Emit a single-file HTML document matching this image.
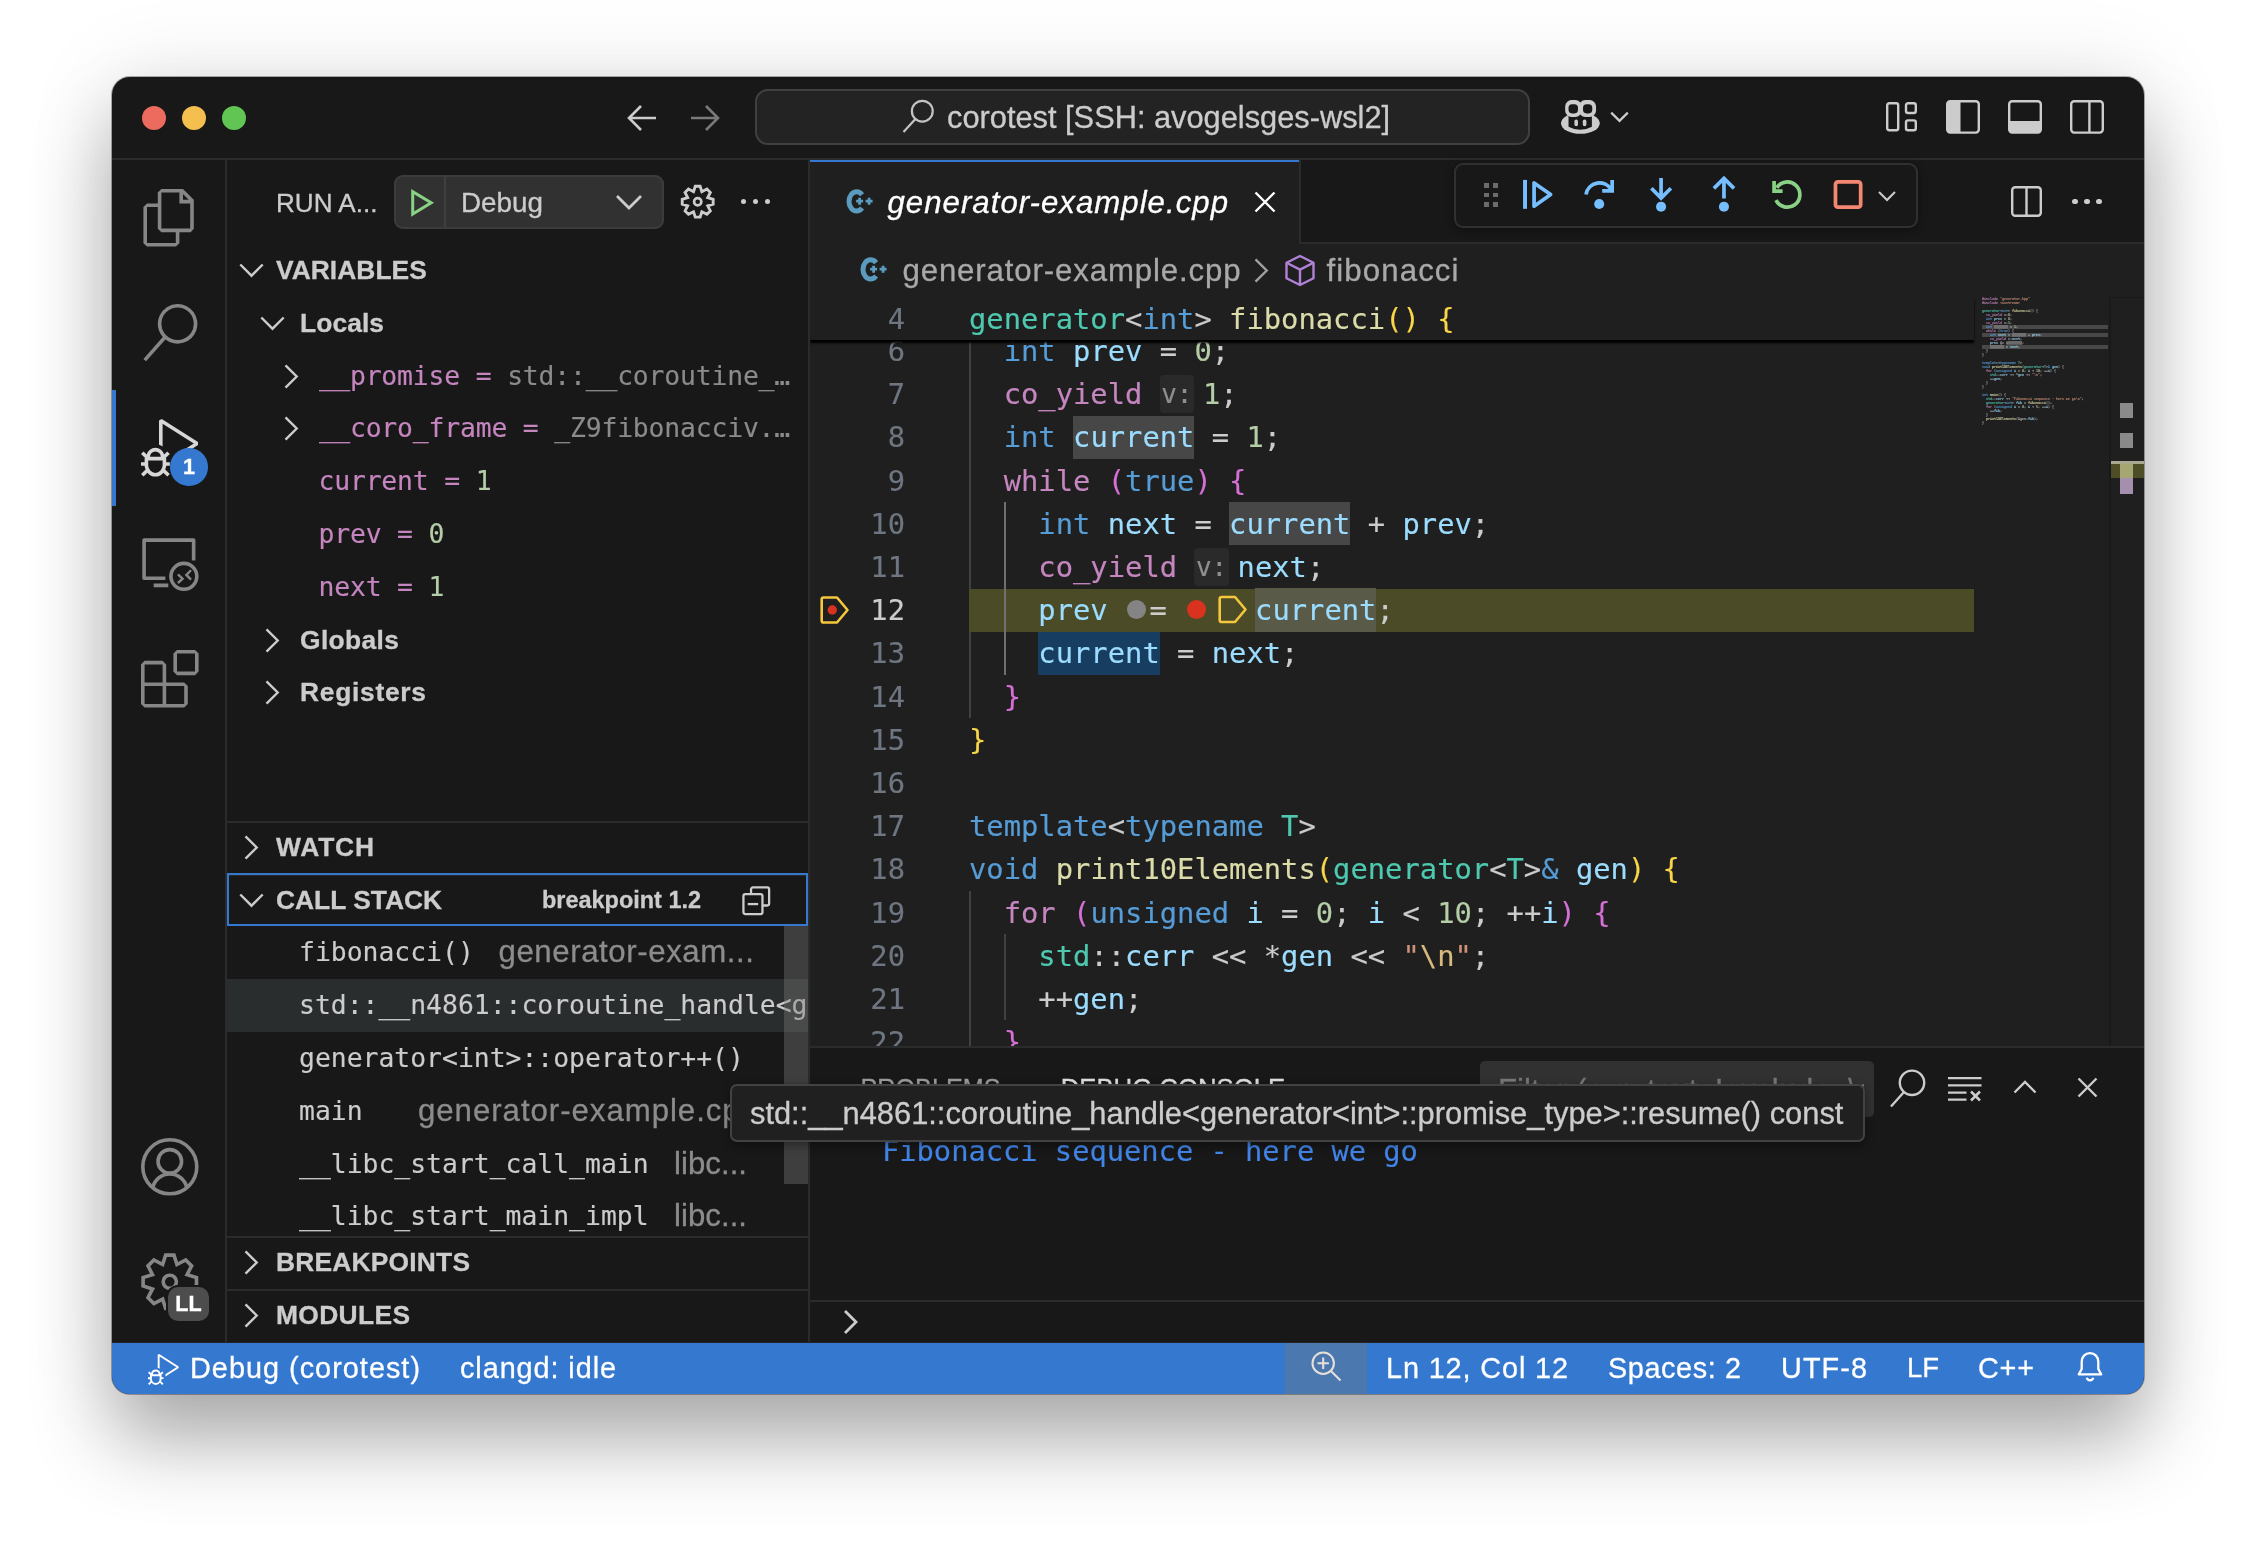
<!DOCTYPE html>
<html lang="en"><head><meta charset="utf-8"><title>generator-example.cpp - corotest [SSH: avogelsges-wsl2]</title>
<style>
html,body{margin:0;padding:0}
body{width:2256px;height:1542px;background:#fff;overflow:hidden;position:relative;font-family:"Liberation Sans",sans-serif;-webkit-text-stroke:.3px}
#win{position:absolute;left:112px;top:77px;width:2032px;height:1317.4px;border-radius:18px;background:#181818;
 box-shadow:0 0 0 1px rgba(0,0,0,.30),0 0 90px rgba(0,0,0,.10),0 48px 80px rgba(0,0,0,.30);}
#clip{position:absolute;left:0;top:0;width:2032px;height:1317.4px;border-radius:18px;overflow:hidden;will-change:transform}
.abs{position:absolute}
svg{position:absolute;overflow:visible}
.mono{font-family:"DejaVu Sans Mono","Liberation Mono",monospace;-webkit-text-stroke:.15px}
.ln{-webkit-text-stroke:.15px;position:absolute;left:0;width:1164px;height:43.2px;line-height:43.2px;font:28.8px "DejaVu Sans Mono","Liberation Mono",monospace;line-height:43.2px;white-space:pre;color:#ccc}
.num{position:absolute;left:0;top:.8px;width:95px;text-align:right;color:#6e7681}
.code{position:absolute;left:159px;top:.8px}
.k{color:#569cd6}.c{color:#c586c0}.t{color:#4ec9b0}.f{color:#dcdcaa}.v{color:#9cdcfe}.n{color:#b5cea8}.s{color:#ce9178}.e{color:#d7ba7d}.o{color:#d4d4d4}
.b1{color:#f9d649}.b2{color:#d670d6}.b3{color:#179fff}
.ih{display:inline-block;font-size:25.9px;color:#8f8f8f;background:#2a2a2a;border-radius:4px;height:38px;line-height:38px;vertical-align:1px;padding:0 1.5px;margin-right:9px}
.wh,.wh2,.ws{display:inline-block;height:43.2px;vertical-align:top;margin-top:-.8px;padding-top:.8px;box-sizing:border-box}.wh{background:#474747}.wh2{background:#5a5a48}.mh{background:#777;color:#777}.ws{background:#173d60}
.row{position:absolute;left:0;width:581px;height:52.8px}
</style></head><body>
<div id="win"><div id="clip">
<div class="abs" style="left:0px;top:81px;width:2032px;height:2px;background:#2b2b2b;"></div>
<div class="abs" style="left:30px;top:29px;width:24px;height:24px;background:#ec6a5e;border-radius:50%"></div>
<div class="abs" style="left:70px;top:29px;width:24px;height:24px;background:#f4bf4f;border-radius:50%"></div>
<div class="abs" style="left:110px;top:29px;width:24px;height:24px;background:#61c554;border-radius:50%"></div>
<svg style="left:512px;top:23px;" width="36" height="36" viewBox="0 0 36 36"><path d="M32 18H5M17 6L5 18l12 12" fill="none" stroke="#ccc" stroke-width="2.6" stroke-linejoin="miter"/></svg>
<svg style="left:575px;top:23px;" width="36" height="36" viewBox="0 0 36 36"><path d="M4 18h27M19 6l12 12-12 12" fill="none" stroke="#7a7a7a" stroke-width="2.6"/></svg>
<div class="abs" style="left:643px;top:12.3px;width:775px;height:55.4px;background:#232323;border-radius:13px;box-shadow:inset 0 0 0 2px #404040"></div>
<svg style="left:788px;top:21px;" width="36" height="38" viewBox="0 0 36 38"><circle cx="22.300" cy="13.200" r="10.400" fill="none" stroke="#c4c4c4" stroke-width="2.200"/><path d="M15.400 21L3.500 34" stroke="#c4c4c4" stroke-width="2.200" fill="none"/></svg>
<div style="position:absolute;left:835px;top:14.2px;height:54px;line-height:54px;white-space:pre;font:normal normal 30.79px 'Liberation Sans', sans-serif;line-height:54px;color:#ccc;">corotest [SSH: avogelsges-wsl2]</div>
<svg style="left:1449.4px;top:23px;" width="38.8" height="33.8" viewBox="0 0 39.300 34.300"><ellipse cx="19.650" cy="23.500" rx="19.650" ry="10.800" fill="#ccc"/><path d="M7.600 13H31.300V27.100Q19.500 33.500 7.600 27.100Z" fill="#181818"/><rect x="4.200" y="0" width="16.800" height="17.200" rx="6.500" fill="#ccc"/><rect x="18.100" y="0" width="17.400" height="17.200" rx="6.500" fill="#ccc"/><rect x="7.600" y="4.400" width="9.600" height="9.200" rx="3.600" fill="#181818"/><rect x="22.300" y="4.400" width="9.400" height="9.200" rx="3.600" fill="#181818"/><rect x="13.600" y="19.700" width="3.600" height="7" rx="1.800" fill="#ccc"/><rect x="22.100" y="19.700" width="3.600" height="7" rx="1.800" fill="#ccc"/></svg>
<svg style="left:1498px;top:33.7px;" width="19" height="12" viewBox="0 0 19 12"><path d="M1.200 1.600l8.300 8.300 8.300-8.300" fill="none" stroke="#ccc" stroke-width="2.200"/></svg>
<svg style="left:1774px;top:25px;" width="31" height="30" viewBox="0 0 31 30"><rect x="1.2" y="1.2" width="11" height="27" rx="2" fill="none" stroke="#ccc" stroke-width="2.4"/><rect x="20" y="1.2" width="9.800" height="9.800" rx="2" fill="none" stroke="#ccc" stroke-width="2.4"/><rect x="20" y="18.400" width="9.800" height="9.800" rx="2" fill="none" stroke="#ccc" stroke-width="2.4"/></svg>
<svg style="left:1833.5px;top:23px;" width="34" height="34" viewBox="0 0 34 34"><rect x="1.2" y="1.2" width="31.6" height="31.400" rx="3" fill="none" stroke="#ccc" stroke-width="2.4"/><path d="M1.2 3.200a2 2 0 0 1 2-2H14.5v31.400H3.200a2 2 0 0 1-2-2z" fill="#ccc"/></svg>
<svg style="left:1896.3px;top:23px;" width="34" height="34" viewBox="0 0 34 34"><rect x="1.2" y="1.2" width="31.6" height="31.400" rx="3" fill="none" stroke="#ccc" stroke-width="2.4"/><path d="M1.2 21h31.600v9.600a2 2 0 0 1-2 2H3.200a2 2 0 0 1-2-2z" fill="#ccc"/></svg>
<svg style="left:1957.6px;top:23px;" width="34" height="34" viewBox="0 0 34 34"><rect x="1.2" y="1.2" width="31.6" height="31.400" rx="3" fill="none" stroke="#ccc" stroke-width="2.4"/><path d="M19.400 1.200v31.400" stroke="#ccc" stroke-width="2.4"/></svg>
<div class="abs" style="left:113px;top:83px;width:2px;height:1182px;background:#2b2b2b;"></div>
<div class="abs" style="left:0px;top:313.4px;width:4px;height:115.2px;background:#3578d0;"></div>
<svg style="left:28.8px;top:111.8px;" width="57.6" height="57.6" viewBox="0 0 24 24"><path fill="#868686" d="M17.5 0h-9L7 1.500V6H2.500L1 7.500v15.070L2.500 24h12.070L16 22.570V18h4.700l1.300-1.430V4.500L17.500 0zm0 2.120l2.380 2.380H17.500V2.120zm-3 20.380h-12v-15H7v9.070L8.500 18h6v4.500zm6-6h-12v-15H16V6h4.500v10.500z"/></svg>
<svg style="left:28.8px;top:227.0px;" width="57.6" height="57.6" viewBox="0 0 24 24"><path fill="#868686" d="M15.250 0a8.250 8.250 0 0 0-6.180 13.720L1 22.880l1.120 1 8.050-9.120A8.251 8.251 0 1 0 15.250.010V0zm0 15a6.750 6.750 0 1 1 0-13.500 6.750 6.750 0 0 1 0 13.500z"/></svg>
<svg style="left:28.8px;top:342.2px;" width="57.6" height="57.6" viewBox="0 0 24 24"><path fill="#d7d7d7" d="M10.940 13.500l-1.320 1.320a3.730 3.730 0 0 0-7.240 0L1.060 13.500 0 14.560l1.720 1.720-.22.22V18H0v1.500h1.500v.080c.077.489.214.966.410 1.420L0 22.940 1.060 24l1.650-1.650A4.308 4.308 0 0 0 6 24a4.310 4.310 0 0 0 3.290-1.650L10.940 24 12 22.940 10.090 21c.198-.464.336-.951.410-1.450v-.1H12V18h-1.500v-1.500l-.22-.22L12 14.560l-1.060-1.060zM6 13.500a2.250 2.250 0 0 1 2.250 2.250h-4.500A2.250 2.250 0 0 1 6 13.500zm3 6a3.330 3.330 0 0 1-3 3 3.330 3.330 0 0 1-3-3v-2.250h6v2.250zm14.760-9.900v1.260L13.500 17.370V15.600l8.500-5.370L9 2v9.460a5.070 5.070 0 0 0-1.500-.72V.630L8.640 0l15.120 9.600z"/></svg>
<div class="abs" style="left:58.3px;top:371.3px;width:37.4px;height:37.4px;background:#3578d0;border-radius:50%"></div>
<div style="position:absolute;left:58.3px;top:371.3px;height:37.4px;line-height:37.4px;white-space:pre;font:normal bold 21.6px 'Liberation Sans', sans-serif;line-height:37.4px;color:#fff;width:37.4px;text-align:center">1</div>
<svg style="left:27.6px;top:457.7px;" width="57.6" height="57.6" viewBox="0 0 24 24"><path fill="none" stroke="#868686" stroke-width="1.5" stroke-linejoin="round" d="M10.560 18.050H1.700V2.150h20.650v8.500M5.700 21h6.100"/><circle cx="18.280" cy="17.230" r="5.400" fill="none" stroke="#868686" stroke-width="1.5"/><path fill="none" stroke="#868686" stroke-width="1" d="M15.800 16.380l1.950 1.820-1.950 1.800M21.270 14.680l-1.950 1.940 1.950 1.950"/></svg>
<svg style="left:28.8px;top:572.6px;" width="57.6" height="57.6" viewBox="0 0 24 24"><path fill="#868686" d="M13.500 1.500L15 0h7.500L24 1.500V9l-1.500 1.500H15L13.500 9V1.500zm1.500 0V9h7.500V1.500H15zM0 15V6l1.500-1.500H9L10.500 6v7.500H18l1.500 1.500v7.500L18 24H1.500L0 22.500V15zm9-1.500V6H1.500v7.500H9zM9 15H1.500v7.500H9V15zm1.500 7.500H18V15h-7.500v7.500z"/></svg>
<svg style="left:28.5px;top:1061.3px;" width="57.6" height="57.6" viewBox="0 0 24 24"><circle cx="12" cy="12" r="11.250" fill="none" stroke="#868686" stroke-width="1.5"/><circle cx="12" cy="9.750" r="4.900" fill="none" stroke="#868686" stroke-width="1.5"/><path d="M4.900 20.600a7.300 7.300 0 0 1 14.200 0" fill="none" stroke="#868686" stroke-width="1.5"/></svg>
<svg style="left:28.8px;top:1176.4px;" width="57.6" height="57.6" viewBox="0 0 24 24"><path d="M10.26 0.88 L13.74 0.88 L14.98 4.79 L18.63 2.91 L21.09 5.37 L19.21 9.02 L23.12 10.26 L23.12 13.74 L19.21 14.98 L21.09 18.63 L18.63 21.09 L14.98 19.21 L13.74 23.12 L10.26 23.12 L9.02 19.21 L5.37 21.09 L2.91 18.63 L4.79 14.98 L0.88 13.74 L0.88 10.26 L4.79 9.02 L2.91 5.37 L5.37 2.91 L9.02 4.79Z" fill="none" stroke="#868686" stroke-width="1.5" stroke-linejoin="miter"/><circle cx="12" cy="12" r="2.750" fill="none" stroke="#868686" stroke-width="1.5"/></svg>
<div class="abs" style="left:54px;top:1208px;width:45px;height:38px;background:#181818;border-radius:12px"></div>
<div class="abs" style="left:56px;top:1210px;width:41px;height:34px;background:#4d4d4d;border-radius:10px"></div>
<div style="position:absolute;left:56px;top:1210px;height:34px;line-height:34px;white-space:pre;font:normal bold 21.6px 'Liberation Sans', sans-serif;line-height:34px;color:#fff;width:41px;text-align:center">LL</div>
<div class="abs" style="left:696px;top:83px;width:2px;height:1182px;background:#2b2b2b;"></div>
<div style="position:absolute;left:164px;top:100.2px;height:52.8px;line-height:52.8px;white-space:pre;font:normal normal 26.1px 'Liberation Sans', sans-serif;line-height:52.8px;color:#cccccc;">RUN A...</div>
<div class="abs" style="left:282px;top:98px;width:270px;height:53.5px;background:#313131;border-radius:9px;box-shadow:inset 0 0 0 2px #3c3c3c"></div>
<div class="abs" style="left:331.5px;top:100px;width:2px;height:49.5px;background:#3f3f3f;"></div>
<svg style="left:299.4px;top:112.2px;" width="23" height="27.6" viewBox="0 0 23 27.600"><path d="M1.700 2.600v22.400L20.200 13.800z" fill="none" stroke="#89d185" stroke-width="3" stroke-linejoin="miter"/></svg>
<div style="position:absolute;left:349px;top:99px;height:53.5px;line-height:53.5px;white-space:pre;font:normal normal 27.84px 'Liberation Sans', sans-serif;line-height:53.5px;color:#cccccc;">Debug</div>
<svg style="left:503px;top:116px;" width="28" height="18" viewBox="0 0 28 18"><path d="M2 3l12 12L26 3" fill="none" stroke="#ccc" stroke-width="2.800"/></svg>
<svg style="left:569.2px;top:108.1px;" width="33.4" height="33.4" viewBox="0 0 24 24"><path d="M10.26 0.88 L13.74 0.88 L14.98 4.79 L18.63 2.91 L21.09 5.37 L19.21 9.02 L23.12 10.26 L23.12 13.74 L19.21 14.98 L21.09 18.63 L18.63 21.09 L14.98 19.21 L13.74 23.12 L10.26 23.12 L9.02 19.21 L5.37 21.09 L2.91 18.63 L4.79 14.98 L0.88 13.74 L0.88 10.26 L4.79 9.02 L2.91 5.37 L5.37 2.91 L9.02 4.79Z" fill="none" stroke="#ccc" stroke-width="2.050" stroke-linejoin="miter"/><circle cx="12" cy="12" r="2.600" fill="none" stroke="#ccc" stroke-width="1.900"/></svg>
<div class="abs" style="left:629.1px;top:122.2px;width:5.2px;height:5.2px;background:#ccc;border-radius:50%"></div>
<div class="abs" style="left:641.1px;top:122.2px;width:5.2px;height:5.2px;background:#ccc;border-radius:50%"></div>
<div class="abs" style="left:653.1px;top:122.2px;width:5.2px;height:5.2px;background:#ccc;border-radius:50%"></div>
<svg style="left:126.5px;top:186.2px;" width="25" height="14.5" viewBox="0 0 25 14.500"><path d="M1.300 1.500L12.500 12.700 23.700 1.500" fill="none" stroke="#ccc" stroke-width="2.400"/></svg>
<div style="position:absolute;left:164px;top:167px;height:52.8px;line-height:52.8px;white-space:pre;font:normal bold 26.4px 'Liberation Sans', sans-serif;line-height:52.8px;color:#cccccc;letter-spacing:0.032px;">VARIABLES</div>
<svg style="left:148.0px;top:239.0px;" width="25" height="14.5" viewBox="0 0 25 14.500"><path d="M1.300 1.500L12.500 12.700 23.700 1.500" fill="none" stroke="#ccc" stroke-width="2.400"/></svg>
<div style="position:absolute;left:188px;top:219.8px;height:52.8px;line-height:52.8px;white-space:pre;font:normal bold 26.4px 'Liberation Sans', sans-serif;line-height:52.8px;color:#cccccc;letter-spacing:0.078px;">Locals</div>
<svg style="left:171.8px;top:286.5px;" width="14.5" height="25" viewBox="0 0 14.500 25"><path d="M1.500 1.300L12.700 12.500 1.500 23.700" fill="none" stroke="#ccc" stroke-width="2.400"/></svg>
<div class="abs mono" style="left:206.5px;top:272.6px;height:52.8px;line-height:52.8px;font-size:26.4px;letter-spacing:-.17px;white-space:pre;color:#8b8b8b;width:476px;overflow:hidden;text-overflow:ellipsis"><span style="color:#c586c0">__promise = </span>std::__coroutine_traits_impl&lt;generator&lt;int&gt;&gt;::promise_type</div>
<svg style="left:171.8px;top:339.3px;" width="14.5" height="25" viewBox="0 0 14.500 25"><path d="M1.500 1.300L12.700 12.500 1.500 23.700" fill="none" stroke="#ccc" stroke-width="2.400"/></svg>
<div class="abs mono" style="left:206.5px;top:325.4px;height:52.8px;line-height:52.8px;font-size:26.4px;letter-spacing:-.17px;white-space:pre;color:#8b8b8b;width:476px;overflow:hidden;text-overflow:ellipsis"><span style="color:#c586c0">__coro_frame = </span>_Z9fibonacciv.Frame</div>
<div class="abs mono" style="left:206.5px;top:378.2px;height:52.8px;line-height:52.8px;font-size:26.4px;letter-spacing:-.17px;white-space:pre;color:#b5cea8;width:476px;overflow:hidden;text-overflow:ellipsis"><span style="color:#c586c0">current = </span>1</div>
<div class="abs mono" style="left:206.5px;top:431.0px;height:52.8px;line-height:52.8px;font-size:26.4px;letter-spacing:-.17px;white-space:pre;color:#b5cea8;width:476px;overflow:hidden;text-overflow:ellipsis"><span style="color:#c586c0">prev = </span>0</div>
<div class="abs mono" style="left:206.5px;top:483.8px;height:52.8px;line-height:52.8px;font-size:26.4px;letter-spacing:-.17px;white-space:pre;color:#b5cea8;width:476px;overflow:hidden;text-overflow:ellipsis"><span style="color:#c586c0">next = </span>1</div>
<svg style="left:152.8px;top:550.5px;" width="14.5" height="25" viewBox="0 0 14.500 25"><path d="M1.500 1.300L12.700 12.500 1.500 23.700" fill="none" stroke="#ccc" stroke-width="2.400"/></svg>
<div style="position:absolute;left:188px;top:536.6px;height:52.8px;line-height:52.8px;white-space:pre;font:normal bold 26.4px 'Liberation Sans', sans-serif;line-height:52.8px;color:#cccccc;letter-spacing:0.367px;">Globals</div>
<svg style="left:152.8px;top:603.3px;" width="14.5" height="25" viewBox="0 0 14.500 25"><path d="M1.500 1.300L12.700 12.500 1.500 23.700" fill="none" stroke="#ccc" stroke-width="2.400"/></svg>
<div style="position:absolute;left:188px;top:589.4px;height:52.8px;line-height:52.8px;white-space:pre;font:normal bold 26.4px 'Liberation Sans', sans-serif;line-height:52.8px;color:#cccccc;letter-spacing:0.715px;">Registers</div>
<div class="abs" style="left:115px;top:743.8px;width:581px;height:2px;background:#2b2b2b;"></div>
<svg style="left:132.3px;top:757.7px;" width="14.5" height="25" viewBox="0 0 14.500 25"><path d="M1.500 1.300L12.700 12.500 1.500 23.700" fill="none" stroke="#ccc" stroke-width="2.400"/></svg>
<div style="position:absolute;left:164px;top:743.8px;height:52.8px;line-height:52.8px;white-space:pre;font:normal bold 26.4px 'Liberation Sans', sans-serif;line-height:52.8px;color:#cccccc;letter-spacing:0.801px;">WATCH</div>
<div class="abs" style="left:115px;top:796.6px;width:581px;height:2px;background:#2b2b2b;"></div>
<svg style="left:126.5px;top:815.8px;" width="25" height="14.5" viewBox="0 0 25 14.500"><path d="M1.300 1.500L12.500 12.700 23.700 1.500" fill="none" stroke="#ccc" stroke-width="2.400"/></svg>
<div style="position:absolute;left:164px;top:796.6px;height:52.8px;line-height:52.8px;white-space:pre;font:normal bold 26.38px 'Liberation Sans', sans-serif;line-height:52.8px;color:#cccccc;">CALL STACK</div>
<div class="abs" style="left:115px;top:796.1px;width:577px;height:49.100px;border:2px solid #3578d0"></div>
<div style="position:absolute;left:430px;top:796.6px;height:52.8px;line-height:52.8px;white-space:pre;font:normal bold 23.46px 'Liberation Sans', sans-serif;line-height:52.8px;color:#cccccc;">breakpoint 1.2</div>
<svg style="left:629.5px;top:808.5px;" width="29.5" height="29.5" viewBox="0 0 31 31"><path d="M9.500 8.500V3.500a2 2 0 0 1 2-2h15a2 2 0 0 1 2 2v15a2 2 0 0 1-2 2h-5" fill="none" stroke="#ccc" stroke-width="2.400"/><rect x="1.500" y="8.500" width="20" height="21" rx="2" fill="none" stroke="#ccc" stroke-width="2.400"/><path d="M6 19h11" stroke="#ccc" stroke-width="2.400"/></svg>
<div class="abs" style="left:115px;top:902.2px;width:581px;height:52.8px;background:#2a2d2e;"></div>
<div class="abs mono" style="left:187px;top:849.4px;height:52.8px;line-height:52.8px;font-size:26.4px;white-space:pre;color:#ccc;width:509px;overflow:hidden">fibonacci()</div>
<div style="position:absolute;left:386.5px;top:849.4px;height:52.8px;line-height:52.8px;white-space:pre;font:normal normal 31.2px 'Liberation Sans', sans-serif;line-height:52.8px;color:#8c8c8c;letter-spacing:0.584px;">generator-exam...</div>
<div class="abs mono" style="left:187px;top:902.2px;height:52.8px;line-height:52.8px;font-size:26.4px;white-space:pre;color:#ccc;width:509px;overflow:hidden">std::__n4861::coroutine_handle&lt;generator&lt;int&gt;::promise_type&gt;::resume() const</div>
<div class="abs mono" style="left:187px;top:955.0px;height:52.8px;line-height:52.8px;font-size:26.4px;white-space:pre;color:#ccc;width:509px;overflow:hidden">generator&lt;int&gt;::operator++()</div>
<div class="abs mono" style="left:187px;top:1007.8px;height:52.8px;line-height:52.8px;font-size:26.4px;white-space:pre;color:#ccc;width:509px;overflow:hidden">main</div>
<div style="position:absolute;left:306px;top:1007.8px;height:52.8px;line-height:52.8px;white-space:pre;font:normal normal 31.2px 'Liberation Sans', sans-serif;line-height:52.8px;color:#8c8c8c;letter-spacing:0.963px;">generator-example.cpp</div>
<div class="abs mono" style="left:187px;top:1060.6px;height:52.8px;line-height:52.8px;font-size:26.4px;white-space:pre;color:#ccc;width:509px;overflow:hidden">__libc_start_call_main</div>
<div style="position:absolute;left:562px;top:1060.6px;height:52.8px;line-height:52.8px;white-space:pre;font:normal normal 31.2px 'Liberation Sans', sans-serif;line-height:52.8px;color:#8c8c8c;letter-spacing:0.034px;">libc...</div>
<div class="abs mono" style="left:187px;top:1113.4px;height:52.8px;line-height:52.8px;font-size:26.4px;white-space:pre;color:#ccc;width:509px;overflow:hidden">__libc_start_main_impl</div>
<div style="position:absolute;left:562px;top:1113.4px;height:52.8px;line-height:52.8px;white-space:pre;font:normal normal 31.2px 'Liberation Sans', sans-serif;line-height:52.8px;color:#8c8c8c;letter-spacing:0.034px;">libc...</div>
<div class="abs" style="left:672px;top:849.4px;width:24px;height:258px;background:rgba(121,121,121,.4);"></div>
<div class="abs" style="left:115px;top:1159px;width:581px;height:2px;background:#2b2b2b;"></div>
<svg style="left:132.3px;top:1172.9px;" width="14.5" height="25" viewBox="0 0 14.500 25"><path d="M1.500 1.300L12.700 12.500 1.500 23.700" fill="none" stroke="#ccc" stroke-width="2.400"/></svg>
<div style="position:absolute;left:164px;top:1159px;height:52.8px;line-height:52.8px;white-space:pre;font:normal bold 26.4px 'Liberation Sans', sans-serif;line-height:52.8px;color:#cccccc;letter-spacing:0.191px;">BREAKPOINTS</div>
<div class="abs" style="left:115px;top:1211.8px;width:581px;height:2px;background:#2b2b2b;"></div>
<svg style="left:132.3px;top:1225.7px;" width="14.5" height="25" viewBox="0 0 14.500 25"><path d="M1.500 1.300L12.700 12.500 1.500 23.700" fill="none" stroke="#ccc" stroke-width="2.400"/></svg>
<div style="position:absolute;left:164px;top:1211.8px;height:52.8px;line-height:52.8px;white-space:pre;font:normal bold 26.4px 'Liberation Sans', sans-serif;line-height:52.8px;color:#cccccc;letter-spacing:0.339px;">MODULES</div>
<div class="abs" style="left:698px;top:83px;width:1334px;height:888px;background:#1f1f1f;"></div>
<div class="abs" style="left:698px;top:83px;width:1334px;height:84px;background:#181818;"></div>
<div class="abs" style="left:698px;top:165px;width:1334px;height:2px;background:#2b2b2b;"></div>
<div class="abs" style="left:698px;top:83px;width:490px;height:84px;background:#1f1f1f;"></div>
<div class="abs" style="left:698px;top:83px;width:490px;height:2px;background:#3578d0;"></div>
<div class="abs" style="left:1187px;top:83px;width:2px;height:84px;background:#2b2b2b;"></div>
<svg style="left:733.8px;top:111.5px;" width="27" height="25" viewBox="0 0 27 25"><path d="M16.100 5.700A7.600 9.700 0 1 0 16.100 19.100" fill="none" stroke="#5b9bbd" stroke-width="5"/><path d="M10.100 12.200h7M13.600 8.700v7M19.600 12.200h7M23.100 8.700v7" stroke="#5b9bbd" stroke-width="2.800" fill="none"/></svg>
<div style="position:absolute;left:775.5px;top:100.2px;height:52.8px;line-height:52.8px;white-space:pre;font:italic normal 31.2px 'Liberation Sans', sans-serif;line-height:52.8px;color:#fff;letter-spacing:1.016px;">generator-example.cpp</div>
<svg style="left:1142px;top:114px;" width="22" height="22" viewBox="0 0 22 22"><path d="M1.500 1.500l19 19M20.500 1.500l-19 19" stroke="#fff" stroke-width="2.400" fill="none"/></svg>
<svg style="left:1899px;top:108.5px;" width="31" height="31" viewBox="0 0 31 31"><rect x="1.200" y="1.200" width="28.600" height="28.600" rx="3" fill="none" stroke="#ccc" stroke-width="2.400"/><path d="M15.500 1.200v28.600" stroke="#ccc" stroke-width="2.400"/></svg>
<div class="abs" style="left:1960.4px;top:122.2px;width:5.2px;height:5.2px;background:#ccc;border-radius:50%"></div>
<div class="abs" style="left:1972.4px;top:122.2px;width:5.2px;height:5.2px;background:#ccc;border-radius:50%"></div>
<div class="abs" style="left:1984.4px;top:122.2px;width:5.2px;height:5.2px;background:#ccc;border-radius:50%"></div>
<div class="abs" style="left:1341.5px;top:86px;width:464.5px;height:65px;background:#181818;border-radius:9px;box-shadow:inset 0 0 0 2px #303030,0 2px 8px rgba(0,0,0,.36)"></div>
<div class="abs" style="left:1371.8px;top:106.1px;width:4.8px;height:4.8px;background:#6c6c6c;"></div>
<div class="abs" style="left:1381.2px;top:106.1px;width:4.8px;height:4.8px;background:#6c6c6c;"></div>
<div class="abs" style="left:1371.8px;top:115.6px;width:4.8px;height:4.8px;background:#6c6c6c;"></div>
<div class="abs" style="left:1381.2px;top:115.6px;width:4.8px;height:4.8px;background:#6c6c6c;"></div>
<div class="abs" style="left:1371.8px;top:125.2px;width:4.8px;height:4.8px;background:#6c6c6c;"></div>
<div class="abs" style="left:1381.2px;top:125.2px;width:4.8px;height:4.8px;background:#6c6c6c;"></div>
<svg style="left:1405.8px;top:98.2px;" width="38.4" height="38.4" viewBox="0 0 16 16"><path d="M2.930 2.050v12.050" stroke="#75beff" stroke-width="1.650" fill="none"/><path d="M6.700 3.300V13L13.600 8.150z" fill="none" stroke="#75beff" stroke-width="1.550" stroke-linejoin="round"/></svg>
<svg style="left:1467.8px;top:98.2px;" width="38.4" height="38.4" viewBox="0 0 16 16"><path d="M2.500 8.100A5.700 5.700 0 0 1 13.100 6.200" fill="none" stroke="#75beff" stroke-width="1.550"/><path d="M13.400 2.050V6.600H9.250" fill="none" stroke="#75beff" stroke-width="1.550"/><circle cx="8" cy="12.100" r="2.100" fill="#75beff"/></svg>
<svg style="left:1530.1px;top:98.2px;" width="38.4" height="38.4" viewBox="0 0 16 16"><path d="M7.950 1.200v8.200M3.900 5.500L7.950 9.600l4.100-4.100" fill="none" stroke="#75beff" stroke-width="1.550"/><circle cx="7.950" cy="13.200" r="2.100" fill="#75beff"/></svg>
<svg style="left:1592.8px;top:98.2px;" width="38.4" height="38.4" viewBox="0 0 16 16"><path d="M7.900 9.800V1.600M3.700 5.600L7.900 1.400l4.200 4.200" fill="none" stroke="#75beff" stroke-width="1.550"/><circle cx="7.900" cy="13.200" r="2.100" fill="#75beff"/></svg>
<svg style="left:1654.8px;top:98.2px;" width="38.4" height="38.4" viewBox="0 0 16 16"><path d="M4.050 5.300A5.250 5.250 0 1 1 3.750 10.500" fill="none" stroke="#89d185" stroke-width="1.550"/><path d="M2.950 2.500V6.700H6.500" fill="none" stroke="#89d185" stroke-width="1.550"/></svg>
<svg style="left:1717.4px;top:98.2px;" width="38.4" height="38.4" viewBox="0 0 16 16"><rect x="2.700" y="2.850" width="10.500" height="10.550" rx="1" fill="none" stroke="#f48771" stroke-width="1.550"/></svg>
<svg style="left:1765.5px;top:113.5px;" width="18" height="11" viewBox="0 0 18 11"><path d="M1 1l8 8 8-8" fill="none" stroke="#ccc" stroke-width="2"/></svg>
<svg style="left:748px;top:179.6px;" width="27" height="25" viewBox="0 0 27 25"><path d="M16.100 5.700A7.600 9.700 0 1 0 16.100 19.100" fill="none" stroke="#5b9bbd" stroke-width="5"/><path d="M10.100 12.200h7M13.600 8.700v7M19.600 12.200h7M23.100 8.700v7" stroke="#5b9bbd" stroke-width="2.800" fill="none"/></svg>
<div style="position:absolute;left:790.5px;top:167.8px;height:52.8px;line-height:52.8px;white-space:pre;font:normal normal 31.2px 'Liberation Sans', sans-serif;line-height:52.8px;color:#a9a9a9;letter-spacing:0.863px;">generator-example.cpp</div>
<svg style="left:1141.8px;top:180.9px;" width="14.5" height="25" viewBox="0 0 14.500 25"><path d="M1.500 1.300L12.700 12.500 1.500 23.700" fill="none" stroke="#a0a0a0" stroke-width="2.400"/></svg>
<svg style="left:1172px;top:177px;" width="32" height="33" viewBox="0 0 32 33"><path d="M16 2L29.500 8.800v15.400L16 31 2.500 24.200V8.800z" fill="none" stroke="#b180d7" stroke-width="2.400" stroke-linejoin="round"/><path d="M2.500 8.800L16 15.600l13.500-6.800M16 15.600V31" fill="none" stroke="#b180d7" stroke-width="2.400" stroke-linejoin="round"/></svg>
<div style="position:absolute;left:1214.5px;top:167.8px;height:52.8px;line-height:52.8px;white-space:pre;font:normal normal 31.2px 'Liberation Sans', sans-serif;line-height:52.8px;color:#a9a9a9;letter-spacing:1.113px;">fibonacci</div>
<div class="abs" style="left:698px;top:219.8px;width:1300px;height:749.2px;overflow:hidden">
<div class="abs" style="left:159px;top:-10.8px;width:2px;height:432.0px;background:#404040"></div>
<div class="abs" style="left:159px;top:292.4px;width:1005px;height:42.800px;background:#4b4b28"></div>
<div class="abs" style="left:194px;top:205.2px;width:2px;height:172.8px;background:#707070"></div>
<div class="abs" style="left:159px;top:594.0px;width:2px;height:216.0px;background:#404040"></div>
<div class="abs" style="left:194px;top:637.2px;width:2px;height:86.4px;background:#404040"></div>
<div class="ln" style="top:32.4px"><span class="num">6</span><span class="code">  <span class="k">int</span> <span class="v">prev</span> = <span class="n">0</span>;</span></div>
<div class="ln" style="top:75.6px"><span class="num">7</span><span class="code">  <span class="c">co_yield</span> <span class="ih">v:</span><span class="n">1</span>;</span></div>
<div class="ln" style="top:118.8px"><span class="num">8</span><span class="code">  <span class="k">int</span> <span class="v wh">current</span> = <span class="n">1</span>;</span></div>
<div class="ln" style="top:162.0px"><span class="num">9</span><span class="code">  <span class="c">while</span> <span class="b2">(</span><span class="k">true</span><span class="b2">)</span> <span class="b2">{</span></span></div>
<div class="ln" style="top:205.2px"><span class="num">10</span><span class="code">    <span class="k">int</span> <span class="v">next</span> = <span class="v wh">current</span> + <span class="v">prev</span>;</span></div>
<div class="ln" style="top:248.4px"><span class="num">11</span><span class="code">    <span class="c">co_yield</span> <span class="ih">v:</span><span class="v">next</span>;</span></div>
<div class="ln" style="top:291.6px"><span class="num" style="color:#ccc">12</span><span class="code">    <span class="v">prev</span> <span style="display:inline-block;width:24.500px"></span>= <span style="display:inline-block;width:70.800px"></span><span class="v wh2">current</span>;</span></div>
<div class="ln" style="top:334.8px"><span class="num">13</span><span class="code">    <span class="v ws">current</span> = <span class="v">next</span>;</span></div>
<div class="ln" style="top:378.0px"><span class="num">14</span><span class="code">  <span class="b2">}</span></span></div>
<div class="ln" style="top:421.2px"><span class="num">15</span><span class="code"><span class="b1">}</span></span></div>
<div class="ln" style="top:464.4px"><span class="num">16</span><span class="code"></span></div>
<div class="ln" style="top:507.6px"><span class="num">17</span><span class="code"><span class="k">template</span>&lt;<span class="k">typename</span> <span class="t">T</span>&gt;</span></div>
<div class="ln" style="top:550.8px"><span class="num">18</span><span class="code"><span class="k">void</span> <span class="f">print10Elements</span><span class="b1">(</span><span class="t">generator</span>&lt;<span class="t">T</span>&gt;<span class="k">&amp;</span> <span class="v">gen</span><span class="b1">)</span> <span class="b1">{</span></span></div>
<div class="ln" style="top:594.0px"><span class="num">19</span><span class="code">  <span class="c">for</span> <span class="b2">(</span><span class="k">unsigned</span> <span class="v">i</span> = <span class="n">0</span>; <span class="v">i</span> &lt; <span class="n">10</span>; ++<span class="v">i</span><span class="b2">)</span> <span class="b2">{</span></span></div>
<div class="ln" style="top:637.2px"><span class="num">20</span><span class="code">    <span class="t">std</span>::<span class="v">cerr</span> &lt;&lt; *<span class="v">gen</span> &lt;&lt; <span class="s">&quot;</span><span class="e">\n</span><span class="s">&quot;</span>;</span></div>
<div class="ln" style="top:680.4px"><span class="num">21</span><span class="code">    ++<span class="v">gen</span>;</span></div>
<div class="ln" style="top:723.6px"><span class="num">22</span><span class="code">  <span class="b2">}</span></span></div>
<div class="abs" style="left:317px;top:303.70000000000005px;width:19px;height:19px;border-radius:50%;background:#848484"></div>
<div class="abs" style="left:377.20000000000005px;top:303.70000000000005px;width:19px;height:19px;border-radius:50%;background:#d9331f"></div>
<svg style="left:408px;top:298.70000000000005px" width="30" height="29" viewBox="0 0 30 29"><path d="M3.500 2h13.500L27.500 14.500 17 27H3.500a1.800 1.800 0 0 1-1.800-1.800V3.800A1.800 1.800 0 0 1 3.500 2z" fill="none" stroke="#f5c73d" stroke-width="2.600" stroke-linejoin="round"/></svg>
<svg style="left:10px;top:298.20000000000005px" width="30" height="30" viewBox="0 0 30 30"><path d="M3.500 2.500h13.500L27.500 15 17 27.500H3.500a1.800 1.800 0 0 1-1.800-1.800V4.300A1.800 1.800 0 0 1 3.500 2.500z" fill="none" stroke="#f5c73d" stroke-width="2.600" stroke-linejoin="round"/><circle cx="12.300" cy="15" r="4.700" fill="#d9331f"/></svg>
<div class="abs" style="left:0;top:0;width:1164px;height:43.2px;background:#1f1f1f;box-shadow:0 3px 2px 0 #000"></div>
<div class="ln" style="top:0"><span class="num">4</span><span class="code"><span class="t">generator</span>&lt;<span class="k">int</span>&gt; <span class="f">fibonacci</span><span class="b1">()</span> <span class="b1">{</span></span></div>
</div>
<div class="abs" style="left:1870px;top:248px;width:126px;height:4px;background:#484848;"></div>
<div class="abs" style="left:1870px;top:256px;width:126px;height:4px;background:#484848;"></div>
<div class="abs" style="left:1870px;top:268px;width:126px;height:4px;background:#484848;"></div>
<div class="abs mono" style="left:1870px;top:220px;width:504px;transform:scale(.25);transform-origin:0 0;font-size:13.28px;line-height:16px;white-space:pre;color:#bbb;opacity:.85;font-weight:bold"><span class="c">#include</span> <span class="s">&quot;generator.hpp&quot;</span>
<span class="c">#include</span> <span class="s">&lt;iostream&gt;</span>

<span class="t">generator</span>&lt;<span class="k">int</span>&gt; <span class="f">fibonacci</span>() {
  <span class="c">co_yield</span> v:<span class="n">0</span>;
  <span class="k">int</span> <span class="v">prev</span> = <span class="n">0</span>;
  <span class="c">co_yield</span> v:<span class="n">1</span>;
  <span class="k">int</span> <span class="v mh">current</span> = <span class="n">1</span>;
  <span class="c">while</span> (<span class="k">true</span>) {
    <span class="k">int</span> <span class="v">next</span> = <span class="v mh">current</span> + <span class="v">prev</span>;
    <span class="c">co_yield</span> v:<span class="v">next</span>;
    <span class="v">prev</span> @= @<span class="v mh">current</span>;
    <span class="v mh">current</span> = <span class="v">next</span>;
  }
}

<span class="k">template</span>&lt;<span class="k">typename</span> <span class="t">T</span>&gt;
<span class="k">void</span> <span class="f">print10Elements</span>(<span class="t">generator</span>&lt;<span class="t">T</span>&gt;<span class="k">&amp;</span> <span class="v">gen</span>) {
  <span class="c">for</span> (<span class="k">unsigned</span> <span class="v">i</span> = <span class="n">0</span>; <span class="v">i</span> &lt; <span class="n">10</span>; ++<span class="v">i</span>) {
    <span class="t">std</span>::<span class="v">cerr</span> &lt;&lt; *<span class="v">gen</span> &lt;&lt; <span class="s">&quot;\n&quot;</span>;
    ++<span class="v">gen</span>;
  }
}

<span class="k">int</span> <span class="f">main</span>() {
  <span class="t">std</span>::<span class="v">cerr</span> &lt;&lt; <span class="s">&quot;Fibonacci sequence - here we go\n&quot;</span>;
  <span class="t">generator</span>&lt;<span class="k">int</span>&gt; <span class="v">fib</span> = <span class="f">fibonacci</span>();
  <span class="c">for</span> (<span class="k">unsigned</span> <span class="v">i</span> = <span class="n">0</span>; <span class="v">i</span> &lt; <span class="n">5</span>; ++<span class="v">i</span>) {
    ++<span class="v">fib</span>;
  }
  <span class="f">print10Elements</span>(&amp;gen:<span class="v">fib</span>);
}</div>
<div class="abs" style="left:1997px;top:220px;width:2px;height:749px;background:#191919;"></div>
<div class="abs" style="left:1997px;top:219.8px;width:35px;height:1.5px;background:#191919;"></div>
<div class="abs" style="left:2008.2px;top:326px;width:13px;height:15px;background:#8a8a8a;"></div>
<div class="abs" style="left:2008.2px;top:355.8px;width:13px;height:15.5px;background:#8a8a8a;"></div>
<div class="abs" style="left:1998.5px;top:384.4px;width:33.5px;height:17px;background:#4d4d26;"></div>
<div class="abs" style="left:1998.5px;top:384.4px;width:33.5px;height:3px;background:#a8a88f;"></div>
<div class="abs" style="left:2008.2px;top:387.4px;width:13px;height:14px;background:#a6a672;"></div>
<div class="abs" style="left:2008.2px;top:401.4px;width:13px;height:15.6px;background:#a58fae;"></div>
<div class="abs" style="left:698px;top:969px;width:1334px;height:2px;background:#2b2b2b;"></div>
<div class="abs" style="left:698px;top:971px;width:1334px;height:294px;background:#181818;"></div>
<div style="position:absolute;left:748.5px;top:985.1px;height:52.8px;line-height:52.8px;white-space:pre;font:normal normal 25.2px 'Liberation Sans', sans-serif;line-height:52.8px;color:#9d9d9d;">PROBLEMS</div>
<div style="position:absolute;left:948.7px;top:985.1px;height:52.8px;line-height:52.8px;white-space:pre;font:normal normal 25.74px 'Liberation Sans', sans-serif;line-height:52.8px;color:#e0e0e0;">DEBUG CONSOLE</div>
<div class="abs" style="left:948.7px;top:1050px;width:224.5px;height:2.4px;background:#3578d0;"></div>
<div class="abs" style="left:1368px;top:984.4px;width:394px;height:55.6px;background:#313131;border-radius:5px"></div>
<div style="position:absolute;left:1386px;top:987.5px;height:52.8px;line-height:52.8px;white-space:pre;font:normal normal 31.2px 'Liberation Sans', sans-serif;line-height:52.8px;color:#787878;width:366px;overflow:hidden">Filter (e.g. text, !exclude, \escape)</div>
<svg style="left:1776px;top:991px;" width="40" height="42" viewBox="0 0 40 42"><circle cx="24" cy="14.800" r="12.200" fill="none" stroke="#ccc" stroke-width="2.400"/><path d="M16 24L3 38.500" stroke="#ccc" stroke-width="2.400" fill="none"/></svg>
<svg style="left:1835px;top:998px;" width="36" height="28" viewBox="0 0 36 28"><path d="M1 3.200h33.500M1 10.300h33.500M1 17.600h18.500M1 24.600h18.500" stroke="#ccc" stroke-width="2.300" fill="none"/><path d="M24 16.500l9 9M33 16.500l-9 9" stroke="#ccc" stroke-width="2.500" fill="none"/></svg>
<svg style="left:1901px;top:1003px;" width="24" height="14" viewBox="0 0 24 14"><path d="M1.500 12.500L12 2l10.500 10.500" fill="none" stroke="#ccc" stroke-width="2.400"/></svg>
<svg style="left:1964.5px;top:1000px;" width="21" height="21" viewBox="0 0 21 21"><path d="M1.500 1.500l18 18M19.500 1.500l-18 18" stroke="#ccc" stroke-width="2.400" fill="none"/></svg>
<div class="abs mono" style="left:770px;top:1053.4px;height:43.2px;line-height:43.2px;font-size:28.8px;letter-spacing:-.05px;white-space:pre;color:#4285e8">Fibonacci sequence - here we go</div>
<div class="abs" style="left:698px;top:1222.5px;width:1334px;height:2px;background:#2b2b2b;"></div>
<svg style="left:731px;top:1232px;" width="16" height="26" viewBox="0 0 16 26"><path d="M2 2l11 11L2 24" fill="none" stroke="#ccc" stroke-width="2.800"/></svg>
<div class="abs" style="left:618px;top:1007.4px;width:1130.5px;height:53.19999999999982px;background:#202020;border:2px solid #424242;border-radius:7px;box-shadow:0 3px 10px rgba(0,0,0,.4)"></div>
<div style="position:absolute;left:638px;top:1011px;height:52.8px;line-height:52.8px;white-space:pre;font:normal normal 30.83px 'Liberation Sans', sans-serif;line-height:52.8px;color:#ccc;">std::__n4861::coroutine_handle&lt;generator&lt;int&gt;::promise_type&gt;::resume() const</div>
<div class="abs" style="left:0px;top:1264.6px;width:2032px;height:2px;background:#252525;"></div>
<div class="abs" style="left:0px;top:1266px;width:2032px;height:52px;background:#3578d0;"></div>
<div class="abs" style="left:1173px;top:1266px;width:82px;height:52px;background:#4c78b0;"></div>
<div style="position:absolute;left:78px;top:1265.2px;height:52.8px;line-height:52.8px;white-space:pre;font:normal normal 28.8px 'Liberation Sans', sans-serif;line-height:52.8px;color:#fff;letter-spacing:1.034px;">Debug (corotest)</div>
<div style="position:absolute;left:348px;top:1265.2px;height:52.8px;line-height:52.8px;white-space:pre;font:normal normal 28.8px 'Liberation Sans', sans-serif;line-height:52.8px;color:#fff;letter-spacing:0.938px;">clangd: idle</div>
<div style="position:absolute;left:1274px;top:1265.2px;height:52.8px;line-height:52.8px;white-space:pre;font:normal normal 28.8px 'Liberation Sans', sans-serif;line-height:52.8px;color:#fff;letter-spacing:0.891px;">Ln 12, Col 12</div>
<div style="position:absolute;left:1496px;top:1265.2px;height:52.8px;line-height:52.8px;white-space:pre;font:normal normal 28.8px 'Liberation Sans', sans-serif;line-height:52.8px;color:#fff;letter-spacing:0.615px;">Spaces: 2</div>
<div style="position:absolute;left:1669px;top:1265.2px;height:52.8px;line-height:52.8px;white-space:pre;font:normal normal 28.8px 'Liberation Sans', sans-serif;line-height:52.8px;color:#fff;letter-spacing:1.102px;">UTF-8</div>
<div style="position:absolute;left:1795px;top:1265.2px;height:52.8px;line-height:52.8px;white-space:pre;font:normal normal 27.42px 'Liberation Sans', sans-serif;line-height:52.8px;color:#fff;">LF</div>
<div style="position:absolute;left:1866px;top:1265.2px;height:52.8px;line-height:52.8px;white-space:pre;font:normal normal 28.8px 'Liberation Sans', sans-serif;line-height:52.8px;color:#fff;letter-spacing:0.781px;">C++</div>
<svg style="left:36px;top:1276.5px;" width="31" height="31" viewBox="0 0 24 24"><path fill="#fff" d="M10.940 13.500l-1.320 1.320a3.730 3.730 0 0 0-7.240 0L1.060 13.500 0 14.560l1.720 1.720-.22.22V18H0v1.500h1.500v.080c.077.489.214.966.410 1.420L0 22.940 1.060 24l1.650-1.650A4.308 4.308 0 0 0 6 24a4.310 4.310 0 0 0 3.290-1.650L10.940 24 12 22.940 10.090 21c.198-.464.336-.951.410-1.450v-.1H12V18h-1.500v-1.500l-.22-.22L12 14.560l-1.060-1.060zM6 13.500a2.250 2.250 0 0 1 2.250 2.250h-4.500A2.250 2.250 0 0 1 6 13.500zm3 6a3.330 3.330 0 0 1-3 3 3.330 3.330 0 0 1-3-3v-2.250h6v2.250zm14.760-9.900v1.260L13.500 17.370V15.600l8.500-5.370L9 2v9.460a5.070 5.070 0 0 0-1.500-.72V.630L8.640 0l15.120 9.600z"/></svg>
<svg style="left:1198px;top:1273px;" width="34" height="34" viewBox="0 0 34 34"><circle cx="13.200" cy="13.200" r="10.700" fill="none" stroke="#e6e0d8" stroke-width="2.050"/><path d="M7.500 13.200h11.400M13.200 7.500v11.400M20.700 20.700l9.800 9.800" stroke="#e6e0d8" stroke-width="2.050" fill="none"/></svg>
<svg style="left:1964.5px;top:1273.5px;" width="26" height="33" viewBox="0 0 26 33"><path d="M13 2.200c-4.900 0-8.300 3.700-8.300 8.600v7.200L1.800 23.400h22.400l-2.900-5.400v-7.200c0-4.900-3.400-8.600-8.300-8.600z" fill="none" stroke="#fff" stroke-width="2.300" stroke-linejoin="round"/><path d="M9.800 26.800a3.300 3.300 0 0 0 6.400 0" fill="none" stroke="#fff" stroke-width="2.300"/></svg>
</div></div></body></html>
